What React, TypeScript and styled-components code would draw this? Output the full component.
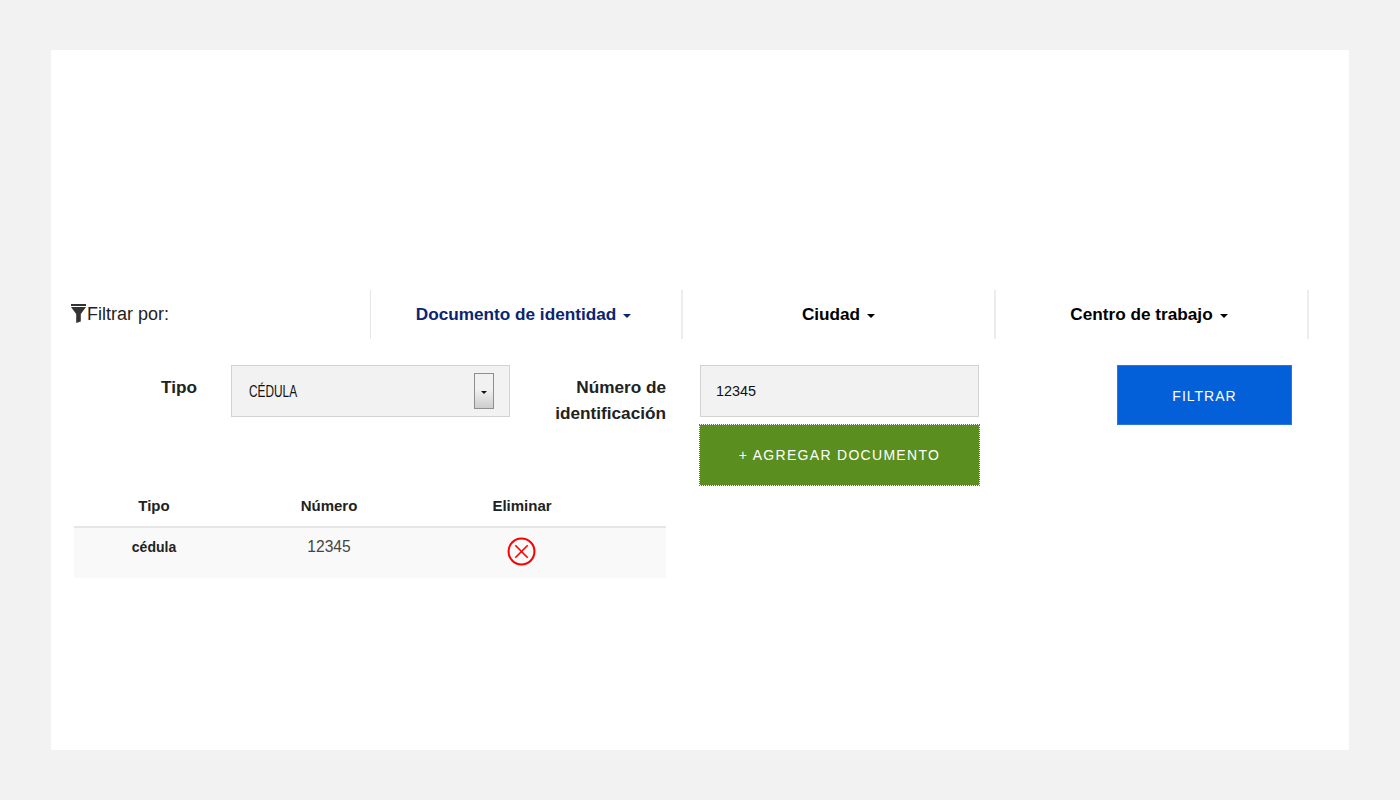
import styled, { createGlobalStyle } from "styled-components";

const GlobalStyle = createGlobalStyle`
  html, body {
    margin: 0;
    padding: 0;
    background: #f2f2f2;
    font-family: "Liberation Sans", Arial, sans-serif;
  }
`;

const Page = styled.div`
  width: 1400px;
  height: 800px;
  padding: 50px 51px;
  box-sizing: border-box;
`;

const Card = styled.div`
  width: 1298px;
  height: 700px;
  padding-top: 240px;
  box-sizing: border-box;
  background: #fff;
`;

const FilterBar = styled.div`
  display: grid;
  grid-template-columns: 320px 312px 313px 313px;
  height: 49px;
`;

const FilterLabel = styled.div`
  display: flex;
  align-items: center;
  gap: 1px;
  padding-left: 20px;
  font-size: 18px;
  color: #222;
  border-right: 1px solid #e6e6e6;
`;

const FunnelIcon = styled.svg`
  width: 15px;
  height: 19px;
  margin-top: -3px;
`;

const Tab = styled.div<{ $active?: boolean; $nudge?: number }>`
  display: flex;
  align-items: center;
  justify-content: center;
  gap: 7px;
  padding-right: ${(p) => p.$nudge ?? 0}px;
  font-size: 17.2px;
  font-weight: 700;
  color: ${(p) => (p.$active ? "#0a2472" : "#000")};
  border-right: 2px solid #ececec;
`;

const Caret = styled.span<{ $small?: boolean }>`
  width: 0;
  height: 0;
  margin-top: 2px;
  border-left: ${(p) => (p.$small ? 3.5 : 4.5)}px solid transparent;
  border-right: ${(p) => (p.$small ? 3.5 : 4.5)}px solid transparent;
  border-top: ${(p) => (p.$small ? 3 : 4)}px solid currentColor;
`;

const FormArea = styled.div`
  display: flex;
  margin: 26px 0 0 23px;
`;

const LeftColumn = styled.div`
  width: 592px;
`;

const FieldsRow = styled.div`
  display: flex;
  height: 125px;
`;

const FieldLabel = styled.div<{ $width: number }>`
  width: ${(p) => p.$width}px;
  flex: none;
  text-align: right;
  font-size: 17.2px;
  line-height: 26px;
  font-weight: 700;
  color: #222;
  padding-top: 9px;
  box-sizing: border-box;
`;

const SelectBox = styled.div`
  width: 279px;
  height: 52px;
  margin-left: 34px;
  flex: none;
  display: flex;
  align-items: center;
  justify-content: space-between;
  box-sizing: border-box;
  padding: 0 15px 0 17px;
  background: #f2f2f2;
  border: 1px solid #d2d2d2;
  font-size: 16px;
  color: #111;
`;

const SelectValue = styled.span`
  display: inline-block;
  width: 48px;
  margin-top: 2px;
  transform: scaleX(0.74);
  transform-origin: left center;
`;

const SelectArrow = styled.span`
  width: 20px;
  height: 36px;
  box-sizing: border-box;
  display: flex;
  align-items: center;
  justify-content: center;
  border: 1px solid #8f8f8f;
  background: linear-gradient(#f1f1f1 45%, #cdcdcd);
  color: #111;
`;

const MiddleColumn = styled.div`
  width: 279px;
  margin-left: 34px;
  display: flex;
  flex-direction: column;
  gap: 8px;
`;

const NumberInput = styled.input`
  width: 279px;
  height: 52px;
  box-sizing: border-box;
  padding: 0 15px;
  background: #f2f2f2;
  border: 1px solid #d2d2d2;
  border-radius: 0;
  outline: none;
  font-family: "Liberation Sans", sans-serif;
  font-size: 14.4px;
  color: #111;
`;

const ActionButton = styled.button<{ $color: string; $spacing: number }>`
  display: block;
  padding: 0;
  background: ${(p) => p.$color};
  color: #fff;
  font-family: "Liberation Sans", sans-serif;
  font-size: 14px;
  letter-spacing: ${(p) => p.$spacing}px;
`;

const AddButton = styled(ActionButton)`
  width: 279px;
  height: 60px;
  border: none;
  outline: 1px dotted #666;
`;

const FilterButton = styled(ActionButton)`
  width: 175px;
  height: 60px;
  margin-left: 138px;
  padding-top: 2px;
  border: 1px solid #2a75e0;
`;

const TableRow = styled.div<{ $body?: boolean }>`
  display: grid;
  grid-template-columns: 160px 190px 196px;
  justify-items: center;
  height: ${(p) => (p.$body ? "50px" : "38px")};
  padding-top: ${(p) => (p.$body ? "10px" : "7px")};
  box-sizing: border-box;
  background: ${(p) => (p.$body ? "#f9f9f9" : "transparent")};
  border-bottom: ${(p) => (p.$body ? "none" : "2px solid #e6e6e6")};
  font-size: 15px;
  color: #222;
`;

const HeadCell = styled.div`
  font-weight: 700;
`;

const BodyCell = styled.div<{ $bold?: boolean }>`
  font-weight: ${(p) => (p.$bold ? 700 : 400)};
  font-size: ${(p) => (p.$bold ? "14px" : "15.6px")};
  line-height: 18px;
  color: ${(p) => (p.$bold ? "#222" : "#444")};
`;

const RemoveIcon = styled.svg`
  width: 29px;
  height: 29px;
  margin: -1px 1px 0 0;
`;

const App = () => {
  return (
    <>
      <GlobalStyle />
      <Page>
        <Card>
          <FilterBar>
            <FilterLabel>
              <FunnelIcon viewBox="0 0 15 19">
                <rect x="0" y="0" width="15" height="2" fill="#333" />
                <path d="M0 3h15L9.8 10v7.5L5.2 19v-9z" fill="#333" />
              </FunnelIcon>
              Filtrar por:
            </FilterLabel>
            <Tab $active $nudge={5}>
              Documento de identidad <Caret />
            </Tab>
            <Tab>
              Ciudad <Caret />
            </Tab>
            <Tab $nudge={5}>
              Centro de trabajo <Caret />
            </Tab>
          </FilterBar>
          <FormArea>
            <LeftColumn>
              <FieldsRow>
                <FieldLabel $width={123}>Tipo</FieldLabel>
                <SelectBox>
                  <SelectValue>CÉDULA</SelectValue>
                  <SelectArrow>
                    <Caret $small />
                  </SelectArrow>
                </SelectBox>
                <FieldLabel $width={156}>
                  Número de
                  <br />
                  identificación
                </FieldLabel>
              </FieldsRow>
              <TableRow>
                <HeadCell>Tipo</HeadCell>
                <HeadCell>Número</HeadCell>
                <HeadCell>Eliminar</HeadCell>
              </TableRow>
              <TableRow $body>
                <BodyCell $bold>cédula</BodyCell>
                <BodyCell>12345</BodyCell>
                <RemoveIcon viewBox="0 0 28 28">
                  <circle cx="14" cy="14" r="12.5" fill="none" stroke="#f00" strokeWidth="2" />
                  <path d="M8 8l12 12M20 8L8 20" stroke="#f00" strokeWidth="1.6" />
                </RemoveIcon>
              </TableRow>
            </LeftColumn>
            <MiddleColumn>
              <NumberInput defaultValue="12345" />
              <AddButton $color="#5a8f20" $spacing={1.3}>
                + AGREGAR DOCUMENTO
              </AddButton>
            </MiddleColumn>
            <FilterButton $color="#0360d8" $spacing={1}>
              FILTRAR
            </FilterButton>
          </FormArea>
        </Card>
      </Page>
    </>
  );
};

export default App;
